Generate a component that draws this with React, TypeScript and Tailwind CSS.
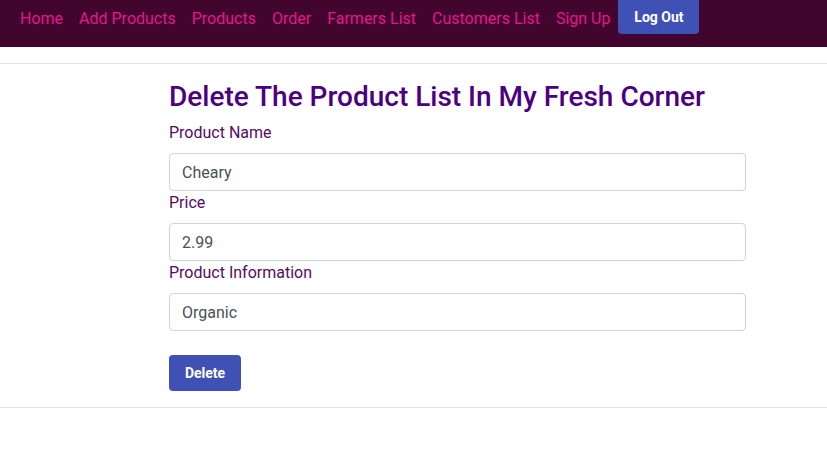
import React from "react";

export default function App() {
  const links = ["Home", "Add Products", "Products", "Order", "Farmers List", "Customers List", "Sign Up"];
  const fields = [
    { label: "Product Name", value: "Cheary" },
    { label: "Price", value: "2.99" },
    { label: "Product Information", value: "Organic" },
  ];
  return (
    <div className="min-h-[454px] bg-white" style={{ fontFamily: "Roboto, 'Liberation Sans', sans-serif" }}>
      <nav className="h-[47px] bg-[#42062e] flex items-start pl-[12px]">
        {links.map((l) => (
          <a key={l} className="px-[8px] pt-[7px] text-[16px] leading-[24px] text-[#e3178f]">
            {l}
          </a>
        ))}
        <button className="ml-[0px] h-[34px] w-[81px] rounded-b-[4px] bg-[#3f51b5] text-white text-[14px] font-bold leading-[34px]">
          Log Out
        </button>
      </nav>
      <div className="mt-[16px] border-t border-[#e3e3e3]" />
      <div className="ml-[169px] w-[577px] pt-[16px]">
        <h2 className="text-[28px] leading-[34px] font-medium text-[#4b0082] mb-[7px]">
          Delete The Product List In My Fresh Corner
        </h2>
        {fields.map((f) => (
          <div key={f.label}>
            <div className="text-[16px] leading-[24px] text-[#560b63] mb-[8px]">{f.label}</div>
            <div className="h-[38px] rounded-[4px] border border-[#ced4da] px-[12px] pt-[1px] flex items-center text-[16px] text-[#495057]">
              {f.value}
            </div>
          </div>
        ))}
        <button className="mt-[24px] h-[36px] w-[72px] rounded-[4px] bg-[#3f51b5] text-white text-[14px] font-bold">
          Delete
        </button>
      </div>
      <div className="mt-[16px] border-t border-[#e3e3e3]" />
    </div>
  );
}
